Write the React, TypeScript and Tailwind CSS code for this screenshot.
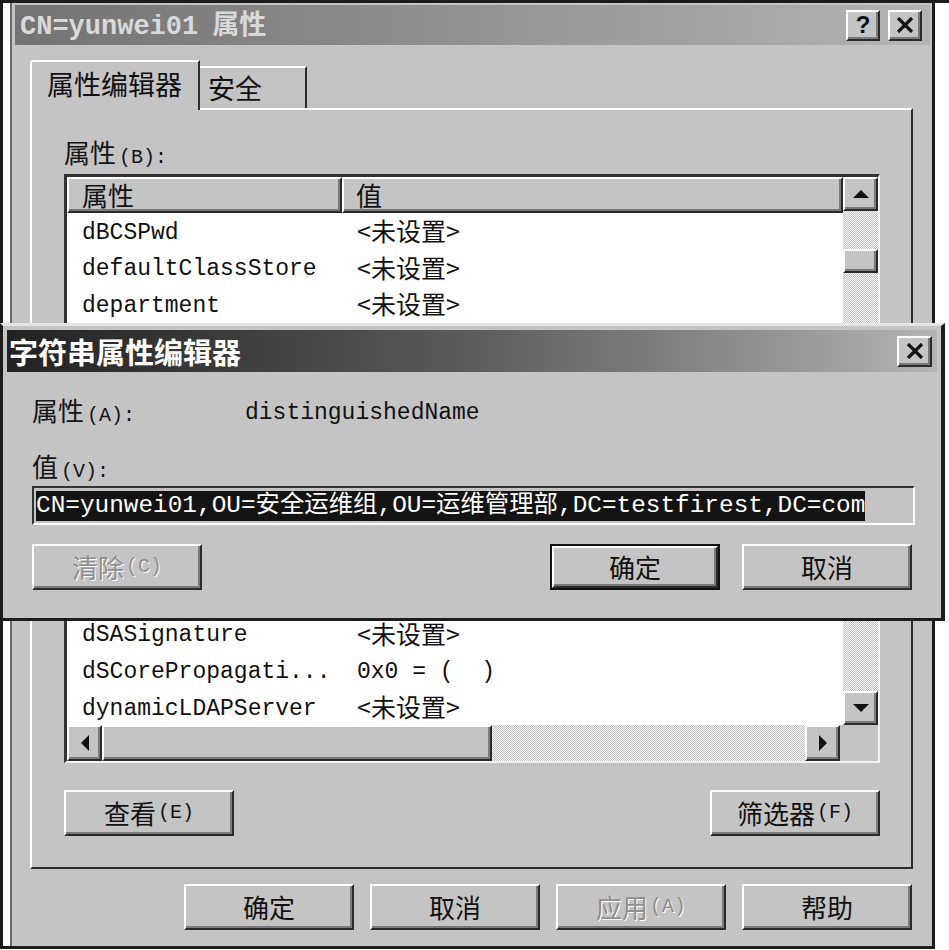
import React from "react";

const cjk = "font-['Noto_Sans_CJK_SC',sans-serif]";
const mono = "font-['Liberation_Mono','Noto_Sans_CJK_SC',monospace]";

// win2000 style bevels
const raised =
  "border-2 border-t-white border-l-white border-r-[#2a2a2a] border-b-[#2a2a2a] shadow-[inset_-2px_-2px_0_#7a7a7a] bg-[#c4c4c4]";
const dither =
  "bg-[image:repeating-conic-gradient(#c2c2c2_0_25%,#fafafa_0_50%)] bg-[length:2px_2px]";

// rows above and below the string editor; the ones in between sit behind it
const topRows: [string, string][] = [
  ["dBCSPwd", "<未设置>"],
  ["defaultClassStore", "<未设置>"],
  ["department", "<未设置>"],
];
const bottomRows: [string, string][] = [
  ["dSASignature", "<未设置>"],
  ["dSCorePropagati...", "0x0 = (  )"],
  ["dynamicLDAPServer", "<未设置>"],
];

function Label({ zh, k }: { zh: string; k: string }) {
  return (
    <span className="flex items-baseline text-[#141414]">
      <span className={`${cjk} text-[26px] leading-[30px]`}>{zh}</span>
      <span className={`${mono} text-[20px] leading-[30px] ml-[3px]`}>{k}</span>
    </span>
  );
}

function Button({
  zh,
  k,
  className = "",
  disabled,
  isDefault,
}: {
  zh: string;
  k?: string;
  className?: string;
  disabled?: boolean;
  isDefault?: boolean;
}) {
  const text = disabled ? "text-[#8e8e8e] [text-shadow:1px_1px_0_#fff]" : "text-[#111]";
  const inner = (
    <div className={`${raised} flex items-center justify-center h-full w-full ${text}`}>
      <span className={`${cjk} text-[26px] leading-none`}>{zh}</span>
      {k && <span className={`${mono} text-[20px] leading-none ml-[2px]`}>{k}</span>}
    </div>
  );
  if (isDefault)
    return <div className={`border-2 border-[#111] ${className}`}>{inner}</div>;
  return <div className={className}>{inner}</div>;
}

function Row({ name, val }: { name: string; val: string }) {
  return (
    <div className="h-[36.6px] flex items-center text-[#111]">
      <span className={`${mono} text-[23px] leading-none w-[275px] pl-[15px] whitespace-pre`}>{name}</span>
      {val.startsWith("<") ? (
        <span className={`${cjk} text-[25px] leading-none pl-[15px] mb-[5px]`}>{val}</span>
      ) : (
        <span className={`${mono} text-[23px] leading-none pl-[15px] whitespace-pre`}>{val}</span>
      )}
    </div>
  );
}

function Tri({ dir }: { dir: "up" | "down" | "left" | "right" }) {
  const pts = {
    up: "0,8 8,0 16,8",
    down: "0,0 16,0 8,8",
    left: "8,0 8,16 0,8",
    right: "0,0 0,16 8,8",
  }[dir];
  const vertical = dir === "up" || dir === "down";
  return (
    <svg width={vertical ? 16 : 8} height={vertical ? 8 : 16} viewBox={vertical ? "0 0 16 8" : "0 0 8 16"}>
      <polygon points={pts} fill="#111" />
    </svg>
  );
}

function CloseGlyph({ size = 18 }: { size?: number }) {
  return (
    <svg width={size} height={size - 2} viewBox="0 0 18 16">
      <path d="M2 1 L16 15 M16 1 L2 15" stroke="#111" strokeWidth="3.2" />
    </svg>
  );
}

export default function App() {
  return (
    <div className="relative w-[949px] h-[950px] bg-white border-t-[3px] border-[#1c1c1c] overflow-hidden">
      {/* main properties dialog */}
      <div className="w-[935px] h-[946px] flex bg-[#c4c4c4] border-l-[3px] border-r-[3px] border-b-[3px] border-[#1c1c1c]">
        <div className="w-[7px] shrink-0 bg-white" />
        <div className="w-[2px] shrink-0 bg-[#6a6a6a]" />
        <div className="flex-1 flex flex-col">
          {/* title bar */}
          <div className="mt-[2px] ml-[3px] mr-[2px] h-[40px] flex items-center bg-linear-to-r from-[#737373] via-[#929292] to-[#b4b4b4]">
            <span className="ml-[5px] flex items-baseline text-[#d9d9d9] font-bold">
              <span className={`${mono} text-[27px]`}>CN=yunwei01</span>
              <span className={`${cjk} text-[27px] ml-[14px]`}>属性</span>
            </span>
            <div className="ml-auto mr-[8px] flex gap-[8px]">
              <div className={`${raised} w-[34px] h-[31px] flex items-center justify-center`}>
                <span className="font-['Liberation_Sans',sans-serif] font-bold text-[24px] leading-none text-[#111]">?</span>
              </div>
              <div className={`${raised} w-[34px] h-[31px] flex items-center justify-center`}>
                <CloseGlyph />
              </div>
            </div>
          </div>

          {/* tabs */}
          <div className="ml-[18px] mt-[15px] flex items-end h-[48px] relative z-10">
            <div className="w-[170px] h-[50px] -mb-[2px] bg-[#c4c4c4] border-t-2 border-l-2 border-white border-r-2 border-r-[#2e2e2e] rounded-tl-[3px] flex items-start pt-[6px] pl-[15px]">
              <span className={`${cjk} text-[27px] leading-[32px] text-[#111]`}>属性编辑器</span>
            </div>
            <div className="w-[107px] h-[42px] bg-[#c4c4c4] border-t-2 border-white border-r-2 border-r-[#2e2e2e] flex items-start pt-[4px] pl-[8px]">
              <span className={`${cjk} text-[27px] leading-[32px] text-[#111]`}>安全</span>
            </div>
          </div>

          {/* tab panel */}
          <div className="ml-[18px] w-[883px] h-[761px] border-2 border-t-white border-l-white border-r-[#2e2e2e] border-b-[#2e2e2e] flex flex-col pl-[32px]">
            <div className="mt-[27px] h-[30px]">
              <Label zh="属性" k="(B):" />
            </div>

            {/* list view */}
            <div className="mt-[7px] w-[816px] h-[589px] border-t-[3px] border-l-[3px] border-t-[#333] border-l-[#333] border-r-2 border-b-2 border-r-[#f2f2f2] border-b-[#f2f2f2] bg-white flex">
              <div className="w-[776px] flex flex-col">
                <div className="h-[36px] flex shrink-0 bg-[#c4c4c4]">
                  <div className={`${raised} w-[275px] pl-[13px] flex items-center`}>
                    <span className={`${cjk} text-[26px] leading-none text-[#111]`}>属性</span>
                  </div>
                  <div className={`${raised} flex-1 pl-[12px] flex items-center`}>
                    <span className={`${cjk} text-[26px] leading-none text-[#111]`}>值</span>
                  </div>
                </div>
                <div className="flex-1 overflow-hidden pt-[2px]">
                  {topRows.map(([n, v]) => (
                    <Row key={n} name={n} val={v} />
                  ))}
                  <div className="h-[292.8px]" />
                  {bottomRows.map(([n, v]) => (
                    <Row key={n} name={n} val={v} />
                  ))}
                </div>
                {/* horizontal scrollbar */}
                <div className="h-[36px] shrink-0 flex bg-[#c4c4c4]">
                  <div className={`${raised} w-[35px] flex items-center justify-center`}>
                    <Tri dir="left" />
                  </div>
                  <div className={`${raised} w-[390px]`} />
                  <div className={`flex-1 ${dither}`} />
                  <div className={`${raised} w-[35px] flex items-center justify-center`}>
                    <Tri dir="right" />
                  </div>
                  <div className="w-[3px]" />
                </div>
              </div>
              {/* vertical scrollbar */}
              <div className="flex-1 flex flex-col">
                <div className={`${raised} h-[34px] flex items-center justify-center`}>
                  <Tri dir="up" />
                </div>
                <div className={`flex-1 flex flex-col ${dither}`}>
                  <div className={`${raised} mt-[38px] h-[24px]`} />
                </div>
                <div className={`${raised} h-[34px] flex items-center justify-center`}>
                  <Tri dir="down" />
                </div>
                <div className="h-[36px] bg-[#c4c4c4]" />
              </div>
            </div>

            <div className="mt-[27px] flex w-[816px] justify-between">
              <Button zh="查看" k="(E)" className="w-[170px] h-[46px]" />
              <Button zh="筛选器" k="(F)" className="w-[170px] h-[46px]" />
            </div>
          </div>

          {/* dialog buttons */}
          <div className="mt-[15px] mr-[20px] flex justify-end gap-[16px]">
            <Button zh="确定" className="w-[170px] h-[46px]" />
            <Button zh="取消" className="w-[170px] h-[46px]" />
            <Button zh="应用" k="(A)" disabled className="w-[170px] h-[46px]" />
            <Button zh="帮助" className="w-[170px] h-[46px]" />
          </div>
        </div>
      </div>

      {/* string attribute editor, lying over the list */}
      <div className="absolute left-0 top-[320px] w-[945px] h-[298px] bg-[#c4c4c4] border-t-[3px] border-t-[#e4e4e4] border-l-[3px] border-l-[#1c1c1c] border-r-[4px] border-r-[#1c1c1c] border-b-[3px] border-b-[#1c1c1c] flex flex-col">
        <div className="mt-[4px] mx-[4px] h-[42px] flex items-center bg-linear-to-r from-[#222] via-[#5c5c5c] to-[#b4b4b4]">
          <span className={`${cjk} font-bold text-[29px] leading-none text-white ml-[2px]`}>字符串属性编辑器</span>
          <div className={`${raised} ml-auto mr-[5px] w-[35px] h-[31px] flex items-center justify-center`}>
            <CloseGlyph />
          </div>
        </div>
        <div className="pl-[29px] flex flex-col">
          <div className="mt-[26px] h-[30px] flex items-center">
            <div className="w-[213px]">
              <Label zh="属性" k="(A):" />
            </div>
            <span className={`${mono} text-[23px] text-[#111]`}>distinguishedName</span>
          </div>
          <div className="mt-[23px] h-[30px]">
            <Label zh="值" k="(V):" />
          </div>
          <div className="mt-[5px] w-[883px] h-[39px] border-t-2 border-l-2 border-t-[#333] border-l-[#333] border-r-2 border-b-2 border-r-white border-b-white flex items-center pl-[2px]">
            <span className={`${mono} text-[24.4px] leading-[30px] bg-[#141414] text-white whitespace-pre`}>
              CN=yunwei01,OU=安全运维组,OU=运维管理部,DC=testfirest,DC=com
            </span>
          </div>
          <div className="mt-[19px] flex w-[880px]">
            <Button zh="清除" k="(C)" disabled className="w-[170px] h-[46px]" />
            <Button zh="确定" isDefault className="ml-auto w-[170px] h-[46px]" />
            <Button zh="取消" className="ml-[22px] w-[170px] h-[46px]" />
          </div>
        </div>
      </div>
    </div>
  );
}
